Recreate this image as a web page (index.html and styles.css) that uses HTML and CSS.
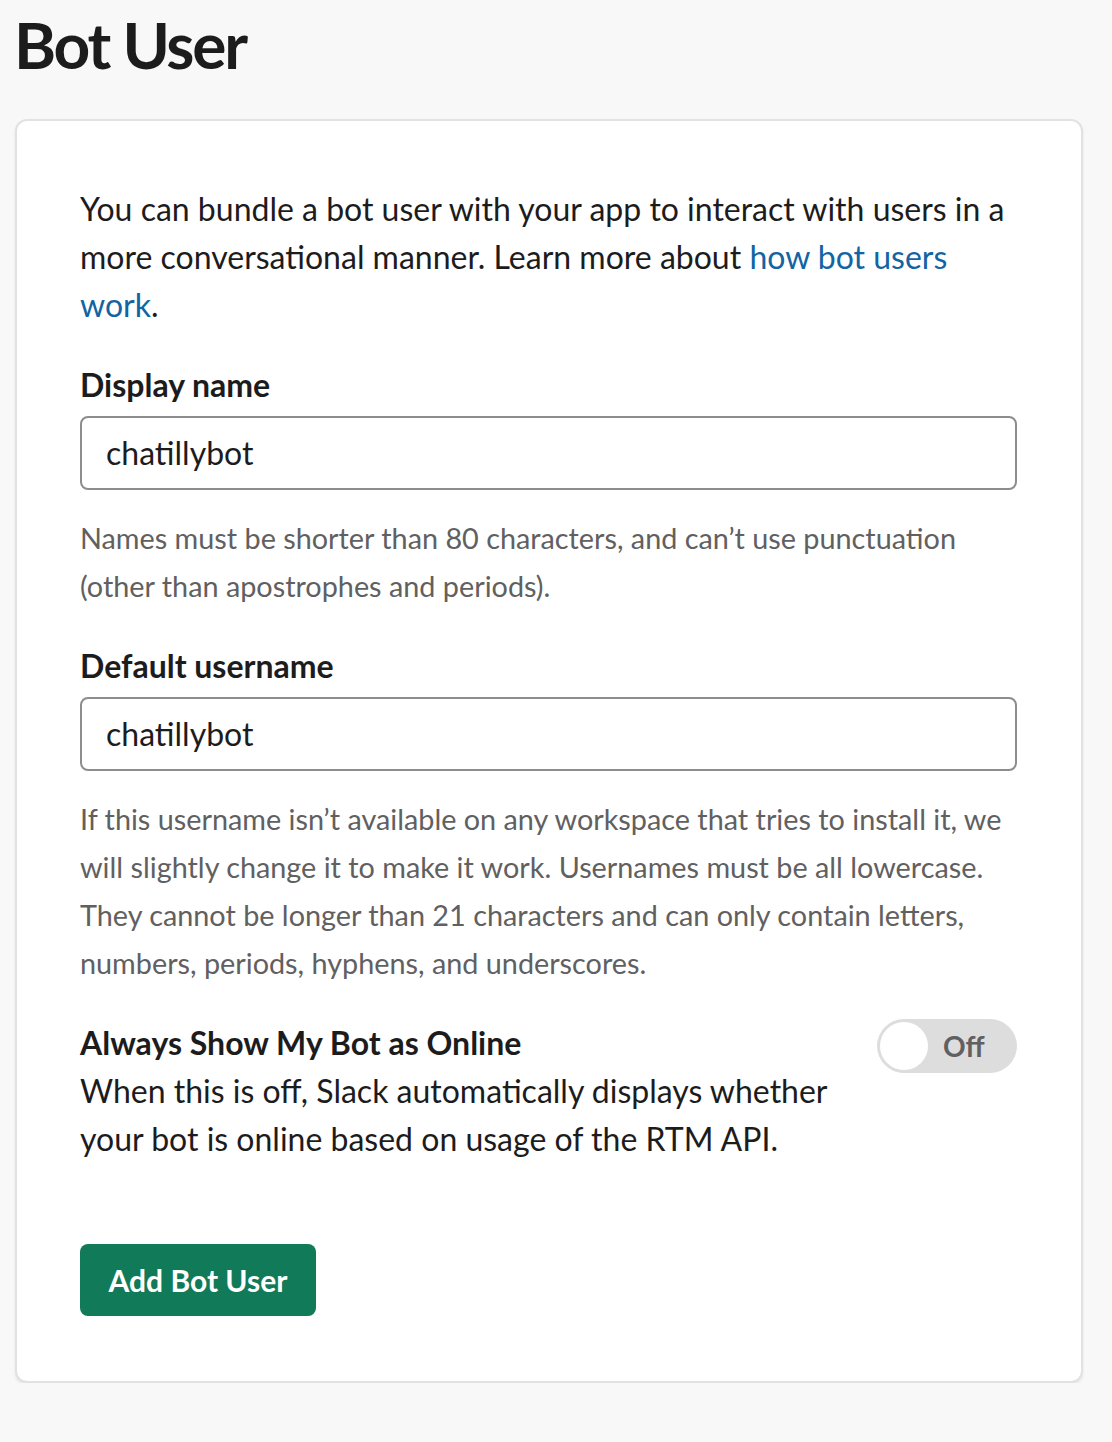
FILE: index.html
```html
<!DOCTYPE html>
<html lang="en">
<head>
<meta charset="utf-8">
<title>Bot User</title>
<link rel="stylesheet" href="styles.css">
</head>
<body>
<main class="page">
  <h1 class="title">Bot User</h1>
  <section class="card">
    <p class="intro">You can bundle a bot user with your app to interact with users in a more conversational manner. Learn more about <a class="link" href="#">how bot users work</a>.</p>

    <div class="field">
      <label class="label">Display name</label>
      <div class="input">chatillybot</div>
      <p class="hint">Names must be shorter than 80 characters, and can’t use punctuation (other than apostrophes and periods).</p>
    </div>

    <div class="field">
      <label class="label">Default username</label>
      <div class="input">chatillybot</div>
      <p class="hint">If this username isn’t available on any workspace that tries to install it, we will slightly change it to make it work. Usernames must be all lowercase. They cannot be longer than 21 characters and can only contain letters, numbers, periods, hyphens, and underscores.</p>
    </div>

    <div class="toggle-row">
      <div class="toggle-text">
        <div class="label">Always Show My Bot as Online</div>
        <p class="toggle-desc">When this is off, Slack automatically displays whether your bot is online based on usage of the RTM API.</p>
      </div>
      <div class="toggle">
        <span class="knob"></span>
        <span class="toggle-label">Off</span>
      </div>
    </div>

    <button class="btn">Add Bot User</button>
  </section>
</main>
</body>
</html>
```

FILE: styles.css
```css
html, body {
  margin: 0;
  padding: 0;
  background: #f8f8f8;
}
body {
  font-family: Lato, "Noto Sans", sans-serif;
  color: #1d1c1d;
}
.page {
  padding: 0 29px 0 15px;
}
.title {
  margin: 0 0 0 -1px;
  padding: 9px 0 0 0;
  font-size: 64px;
  line-height: 72px;
  font-weight: 700;
  letter-spacing: -2.2px;
  color: #1d1c1d;
  height: 110px;
}
.card {
  background: #fff;
  border: 2px solid #e2e2e2;
  border-radius: 12px;
  box-shadow: 0 2px 3px rgba(0,0,0,0.08);
  padding: 64px 64px 65px 63px;
}
.intro {
  margin: 0;
  font-size: 32px;
  line-height: 48px;
}
.link {
  color: #1264a3;
  text-decoration: none;
}
.field {
  margin-top: 32px;
}
.label {
  display: block;
  font-size: 32px;
  line-height: 48px;
  font-weight: 700;
}
.input {
  margin-top: 7px;
  height: 70px;
  border: 2px solid #8d8d8d;
  border-radius: 8px;
  padding: 0 24px;
  font-size: 32px;
  line-height: 70px;
  color: #1d1c1d;
}
.hint {
  margin: 24px 0 0;
  font-size: 28.8px;
  line-height: 48px;
  color: #616061;
}
.toggle-row {
  display: flex;
  align-items: flex-start;
  margin-top: 32px;
}
.toggle-text {
  flex: 1;
  margin-right: 48px;
}
.toggle-desc {
  margin: 0;
  font-size: 32px;
  line-height: 48px;
}
.toggle {
  position: relative;
  width: 140px;
  height: 54px;
  border-radius: 27px;
  background: #dddddd;
  flex-shrink: 0;
}
.knob {
  position: absolute;
  left: 3px;
  top: 3px;
  width: 48px;
  height: 48px;
  border-radius: 50%;
  background: #fff;
}
.toggle-label {
  position: absolute;
  left: 66px;
  top: 0;
  line-height: 54px;
  font-size: 28px;
  font-weight: 700;
  color: #616061;
}
.btn {
  display: block;
  margin-top: 81px;
  width: 236px;
  height: 72px;
  border: none;
  border-radius: 8px;
  background: #117a58;
  color: #fff;
  font-family: Lato, "Noto Sans", sans-serif;
  font-size: 30px;
  font-weight: 700;
  padding: 0;
}
```
